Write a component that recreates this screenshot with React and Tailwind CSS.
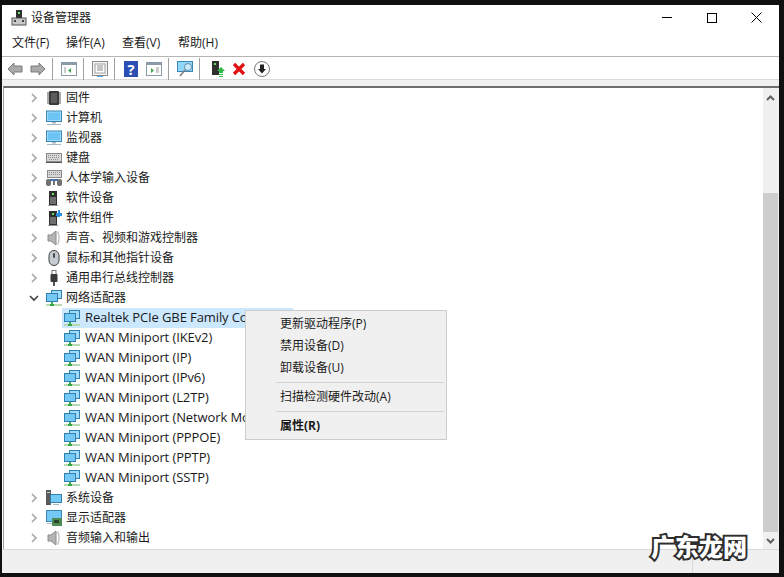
import React from 'react';

const Chevron = ({ open }) => (
  <svg width="10" height="10" viewBox="0 0 10 10" fill="none" stroke={open ? '#404040' : '#a6a6a6'} strokeWidth="1.6">
    {open ? <path d="M1 3l4 4 4-4" /> : <path d="M3 1l4 4-4 4" />}
  </svg>
);

const Svg = ({ children, w = 16, h = 16, vb }) => (
  <svg width={w} height={h} viewBox={vb || `0 0 ${w} ${h}`}>{children}</svg>
);

const Chip = () => (
  <Svg>
    <rect x="3" y="1" width="10" height="14" rx="1" fill="#3a3a3a" />
    <rect x="5" y="3" width="6" height="10" fill="#5c5c5c" />
    <path d="M1 3h2M1 5h2M1 7h2M1 9h2M1 11h2M1 13h2M13 3h2M13 5h2M13 7h2M13 9h2M13 11h2M13 13h2" stroke="#555" />
  </Svg>
);

const Screen = () => (
  <Svg>
    <rect x="0.5" y="1" width="15" height="10.5" fill="#9fdcfb" stroke="#3b87b5" />
    <rect x="2" y="2.5" width="12" height="7.5" fill="#6cc4f5" />
    <rect x="6" y="12" width="4" height="1.5" fill="#a9b8c2" />
    <rect x="1" y="14" width="14" height="1" fill="#a9b8c2" />
  </Svg>
);

const Keyboard = () => (
  <Svg>
    <rect x="0.5" y="3.5" width="15" height="8" fill="#d8d8d8" stroke="#8a8a8a" />
    <path d="M2 5.5h12M2 7.5h12M3 9.5h10" stroke="#8e8e8e" strokeDasharray="1 1" />
    <rect x="0" y="12" width="16" height="1" fill="#555" />
  </Svg>
);

const Hid = () => (
  <Svg>
    <rect x="1.5" y="0.5" width="14" height="7" fill="#d8d8d8" stroke="#8a8a8a" />
    <path d="M3 2.5h11M3 4.5h11" stroke="#8e8e8e" strokeDasharray="1 1" />
    <rect x="0" y="9" width="5" height="7" rx="2" fill="#707070" />
    <rect x="11" y="9" width="5" height="7" rx="2" fill="#707070" />
    <path d="M4 10h8" stroke="#4b6fa8" strokeWidth="2" />
    <rect x="7" y="11" width="2" height="4" fill="#777" />
  </Svg>
);

const Tower = ({ plus }) => (
  <Svg>
    <rect x="3" y="1" width="8" height="14" fill="#2f2f2f" />
    <rect x="6" y="3" width="2" height="2" fill="#5fe05f" />
    <rect x="4" y="7" width="6" height="7" fill="#6f6f6f" />
    <rect x="2" y="15" width="10" height="1" fill="#9a9a9a" />
    {plus && <path d="M10 3h2V0h2v3h2v3h-2v1h-3V6h-1z" fill="#2f8fe0" />}
  </Svg>
);

const Speaker = () => (
  <Svg>
    <path d="M2 5h3l5-4v14l-5-4H2z" fill="#b4b4b4" stroke="#8a8a8a" />
    <path d="M11.5 1.5c2 3 2 10 0 13" fill="none" stroke="#c6c6c6" strokeWidth="1.5" />
  </Svg>
);

const Mouse = () => (
  <Svg>
    <rect x="3" y="0.5" width="10" height="15" rx="5" fill="#c7ccd4" stroke="#3d3d3d" />
    <rect x="7" y="3" width="2" height="5" rx="1" fill="#4a4a4a" />
  </Svg>
);

const Usb = () => (
  <Svg>
    <rect x="6" y="0.5" width="4" height="4" fill="#fff" stroke="#777" />
    <rect x="4.5" y="4" width="7" height="8" rx="1" fill="#3a3a3a" />
    <rect x="7" y="12" width="2" height="4" fill="#555" />
  </Svg>
);

const Network = () => (
  <Svg>
    <rect x="5.5" y="0.5" width="10" height="8" fill="#9fdcfb" stroke="#2f7fb0" />
    <rect x="0.5" y="3.5" width="11" height="8" fill="#74c8f6" stroke="#2f7fb0" />
    <rect x="5" y="12" width="2" height="2" fill="#3fb34f" />
    <rect x="0" y="14" width="16" height="2" fill="#b9d9b0" />
    <rect x="4" y="14" width="4" height="2" fill="#35a845" />
  </Svg>
);

const SystemDev = () => (
  <Svg>
    <rect x="0" y="0" width="5" height="15" fill="#5a5a5a" />
    <rect x="1" y="2" width="3" height="1" fill="#d0d0d0" />
    <rect x="4.5" y="4.5" width="11" height="8" fill="#74c8f6" stroke="#2f7fb0" />
    <rect x="7" y="14" width="6" height="1" fill="#a9b8c2" />
  </Svg>
);

const Display = () => (
  <Svg>
    <rect x="0.5" y="0.5" width="15" height="11" fill="#74c8f6" stroke="#3b87b5" />
    <rect x="6" y="8" width="10" height="8" fill="#4f8a55" />
    <rect x="8" y="10" width="5" height="3" fill="#26452b" />
    <rect x="1" y="13" width="5" height="1" fill="#a9b8c2" />
  </Svg>
);

const icons = {
  chip: <Chip />, screen: <Screen />, keyboard: <Keyboard />, hid: <Hid />, tower: <Tower />,
  towerPlus: <Tower plus />, speaker: <Speaker />, mouse: <Mouse />, usb: <Usb />,
  network: <Network />, system: <SystemDev />, display: <Display />,
};

const topRows = [
  ['固件', 'chip'], ['计算机', 'screen'], ['监视器', 'screen'], ['键盘', 'keyboard'],
  ['人体学输入设备', 'hid'], ['软件设备', 'tower'], ['软件组件', 'towerPlus'],
  ['声音、视频和游戏控制器', 'speaker'], ['鼠标和其他指针设备', 'mouse'], ['通用串行总线控制器', 'usb'],
];
const adapters = [
  'Realtek PCIe GBE Family Controller', 'WAN Miniport (IKEv2)', 'WAN Miniport (IP)', 'WAN Miniport (IPv6)',
  'WAN Miniport (L2TP)', 'WAN Miniport (Network Monitor)', 'WAN Miniport (PPPOE)', 'WAN Miniport (PPTP)', 'WAN Miniport (SSTP)',
];
const bottomRows = [['系统设备', 'system'], ['显示适配器', 'display'], ['音频输入和输出', 'speaker']];

const TreeRow = ({ label, icon, open }) => (
  <div className="flex h-5 items-center">
    <div className="ml-[25px] mr-[7px] flex w-2.5 justify-center"><Chevron open={open} /></div>
    <div className="flex w-4 justify-center">{icons[icon]}</div>
    <span className="ml-[4px]">{label}</span>
  </div>
);

const ToolSep = ({ ml, mr }) => <div className={`h-[22px] w-px bg-[#a0a0a0] ${ml} ${mr}`} />;

const Arrow = ({ flip }) => (
  <svg width="16" height="14" viewBox="0 0 16 14" className={flip ? '-scale-x-100' : ''}>
    <path d="M1 7l6-6v3h8v6H7v3z" fill="#a9a9a9" stroke="#7a7a7a" />
  </svg>
);

const MenuItem = ({ children, bold }) => (
  <div className={`flex h-[22px] items-center pl-[34px] ${bold ? 'font-bold' : ''}`}>{children}</div>
);

export default function App() {
  return (
    <div className="relative h-[577px] w-[784px] overflow-hidden bg-[#101010] pb-[4px] pl-[2px] pr-[5px] pt-[5px] text-[12px] text-[#1a1a1a] [font-family:'Open_Sans','Noto_Sans_CJK_SC',sans-serif]">
      <div className="flex h-full flex-col bg-white">
        {/* Title bar */}
        <div className="flex h-[25px] shrink-0 items-center">
          <svg width="16" height="16" viewBox="0 0 16 16" className="ml-[9px] mt-[1px]">
            <rect x="5" y="0" width="6" height="8" fill="#2f2f2f" />
            <rect x="7" y="2" width="2" height="2" fill="#5fe05f" />
            <rect x="1" y="8" width="14" height="7" fill="#c9c9c9" stroke="#555" />
            <rect x="3" y="10" width="2" height="2" fill="#444" />
            <rect x="11" y="10" width="2" height="2" fill="#444" />
          </svg>
          <span className="ml-[4px]">设备管理器</span>
          <div className="ml-auto flex h-full">
            <div className="flex w-[45px] items-center justify-center">
              <div className="h-px w-2.5 bg-black" />
            </div>
            <div className="flex w-[45px] items-center justify-center">
              <div className="h-2.5 w-2.5 border border-black" />
            </div>
            <div className="flex w-[45px] items-center justify-center">
              <svg width="11" height="11" viewBox="0 0 11 11" stroke="#000" fill="none"><path d="M0.5 0.5l10 10M10.5 0.5l-10 10" /></svg>
            </div>
          </div>
        </div>

        {/* Menu bar */}
        <div className="flex h-[27px] shrink-0 items-center border-b border-[#b5b5b5] pl-[10px]">
          <span className="w-[54px]">文件(F)</span>
          <span className="w-[56px]">操作(A)</span>
          <span className="w-[56px]">查看(V)</span>
          <span>帮助(H)</span>
        </div>

        {/* Toolbar */}
        <div className="flex h-[23px] shrink-0 items-center border-b border-[#d9d9d9] pl-[5px] pt-[2px]">
          <Arrow />
          <div className="ml-[7px] flex"><Arrow flip /></div>
          <ToolSep ml="ml-[6px]" mr="mr-[8px]" />
          <svg width="16" height="14" viewBox="0 0 16 14">
            <rect x="0.5" y="0.5" width="15" height="13" fill="#fff" stroke="#8a9aa8" />
            <rect x="1" y="1" width="14" height="2" fill="#8a9aa8" />
            <path d="M10 6v5L7 8.5z" fill="#3fa34f" />
            <path d="M3 6h2M3 8h2M3 10h2" stroke="#999" />
          </svg>
          <ToolSep ml="ml-[6px]" mr="mr-[8px]" />
          <svg width="16" height="16" viewBox="0 0 16 16">
            <rect x="0.5" y="0.5" width="15" height="14" fill="#f4f4f4" stroke="#8a8a8a" />
            <rect x="3" y="3" width="10" height="9" fill="#fff" stroke="#a0a0a0" />
            <path d="M5 5h6M5 7h6M5 9h6" stroke="#8a8a8a" />
            <rect x="5" y="15" width="6" height="1" fill="#4aa8e8" />
          </svg>
          <ToolSep ml="ml-[6px]" mr="mr-[9px]" />
          <div className="flex h-4 w-[14px] items-center justify-center bg-[#2c4fb4] text-[15px] font-bold leading-none text-white">?</div>
          <div className="ml-2 flex">
            <svg width="16" height="14" viewBox="0 0 16 14">
              <rect x="0.5" y="0.5" width="15" height="13" fill="#fff" stroke="#8a9aa8" />
              <rect x="1" y="1" width="14" height="2" fill="#8a9aa8" />
              <path d="M5 6v5l3-2.5z" fill="#3fa34f" />
              <path d="M10 6h3M10 8h3M10 10h3" stroke="#999" />
            </svg>
          </div>
          <ToolSep ml="ml-[6px]" mr="mr-[8px]" />
          <svg width="17" height="16" viewBox="0 0 17 16">
            <rect x="0.5" y="0.5" width="15" height="10" fill="#8fd6fa" stroke="#3b87b5" />
            <circle cx="11" cy="6" r="3.5" fill="#c9ecfc" stroke="#6a8fa5" />
            <path d="M8 9l-5 6" stroke="#7a7a7a" strokeWidth="1.5" />
          </svg>
          <ToolSep ml="ml-[5px]" mr="mr-[11px]" />
          <svg width="14" height="16" viewBox="0 0 14 16">
            <rect x="1" y="0" width="7" height="14" fill="#2f2f2f" />
            <rect x="3" y="2" width="2" height="2" fill="#5fe05f" />
            <path d="M10 6l4 4h-2v2h-4v-2H6z" fill="#2fb84a" />
            <rect x="8" y="13" width="4" height="1" fill="#2fb84a" />
            <rect x="8" y="15" width="4" height="1" fill="#2fb84a" />
          </svg>
          <div className="ml-[7px] flex">
            <svg width="14" height="14" viewBox="0 0 14 14" className="block">
              <path d="M2 2l10 10M12 2L2 12" stroke="#e01010" strokeWidth="3.2" />
            </svg>
          </div>
          <div className="ml-2 flex">
            <svg width="16" height="16" viewBox="0 0 16 16" className="block">
              <circle cx="8" cy="8" r="7.5" fill="#fff" stroke="#777" />
              <path d="M6 3.5h4V8h2l-4 4.5L4 8h2z" fill="#222" />
            </svg>
          </div>
        </div>

        {/* Strip above tree */}
        <div className="h-[6px] shrink-0 bg-[#f0f0f0]" />

        {/* Tree and scrollbar */}
        <div className="ml-px flex min-h-0 flex-1 border-l border-t-2 border-[#6d6d6d] border-l-[#a0a0a0]">
          <div className="relative flex-1 overflow-hidden">
            {topRows.map(([label, icon]) => <TreeRow key={label} label={label} icon={icon} />)}
            <TreeRow label="网络适配器" icon="network" open />
            {adapters.map((name, i) => (
              <div key={name} className="flex h-5 items-center pl-[58px]">
                <div className={`flex h-5 items-center pl-[2px] pr-px ${i === 0 ? 'bg-[#cce8ff]' : ''}`}>
                  <Network />
                  <span className="ml-[5px] whitespace-nowrap text-[13px] tracking-[-0.1px]">{name}</span>
                </div>
              </div>
            ))}
            {bottomRows.map(([label, icon]) => <TreeRow key={label} label={label} icon={icon} />)}
          </div>
          <div className="flex w-4 shrink-0 flex-col bg-[#f0f0f0] pr-px">
            <div className="flex h-[17px] items-center justify-center pt-[2px]">
              <svg width="9" height="6" viewBox="0 0 9 6" fill="none" stroke="#606060" strokeWidth="2"><path d="M1 5l3.5-3.5L8 5" /></svg>
            </div>
            <div className="h-[88px]" />
            <div className="min-h-0 flex-1 bg-[#cdcdcd]" />
            <div className="flex h-[17px] items-center justify-center">
              <svg width="9" height="6" viewBox="0 0 9 6" fill="none" stroke="#606060" strokeWidth="2"><path d="M1 1l3.5 3.5L8 1" /></svg>
            </div>
          </div>
        </div>

        {/* Status bar */}
        <div className="flex h-6 shrink-0 border-t border-[#d9d9d9] bg-[#f0f0f0]">
          <div className="ml-[690px] h-full w-px bg-[#d9d9d9]" />
        </div>
      </div>

      {/* Context menu */}
      <div className="absolute left-[245px] top-[310px] w-[202px] border border-[#cccccc] bg-[#f0f0f0] pb-[2px] pt-[2px] text-[12px]">
        <MenuItem>更新驱动程序(P)</MenuItem>
        <MenuItem>禁用设备(D)</MenuItem>
        <MenuItem>卸载设备(U)</MenuItem>
        <div className="mb-[3px] ml-[30px] mr-[2px] mt-[3px] h-px bg-[#d2d2d2]" />
        <MenuItem>扫描检测硬件改动(A)</MenuItem>
        <div className="mb-[3px] ml-[30px] mr-[2px] mt-[3px] h-px bg-[#d2d2d2]" />
        <MenuItem bold>属性(R)</MenuItem>
      </div>

      {/* Watermark */}
      <div className="absolute left-[651px] top-[532px] text-[24px] font-black leading-[30px] text-white [-webkit-text-stroke:4px_#2e2e2e] [paint-order:stroke_fill]">
        广东龙网
      </div>
    </div>
  );
}
